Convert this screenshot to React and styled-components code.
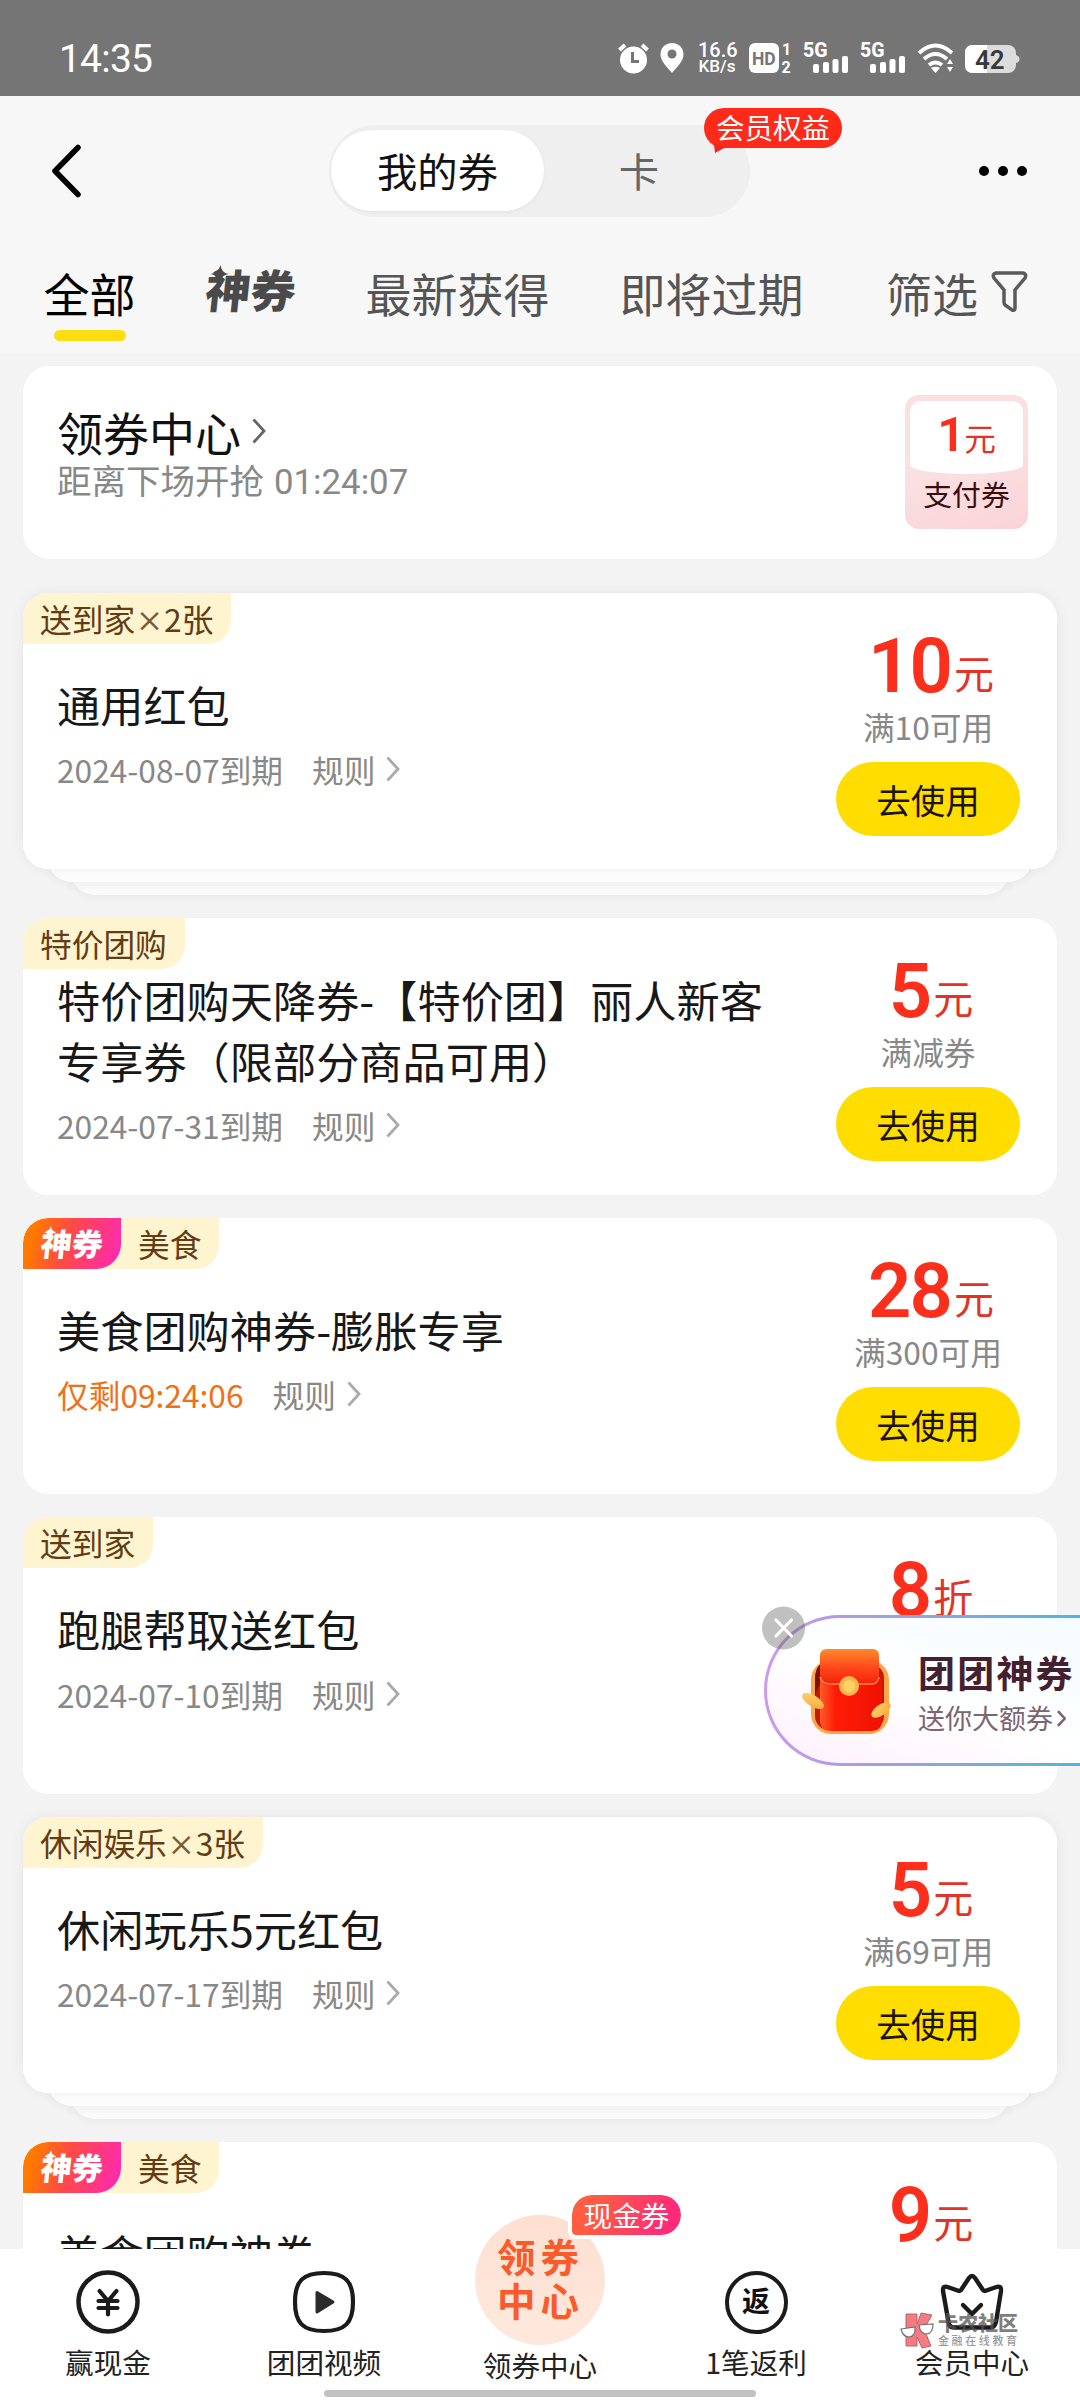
import React from 'react';
import styled, { createGlobalStyle } from 'styled-components';

const GlobalStyle = createGlobalStyle`
  * {
    box-sizing: border-box;
  }
  body {
    margin: 0;
    background: #f3f3f3;
    font-family: 'Noto Sans CJK SC', 'Noto Sans', sans-serif;
    font-weight: 400;
    color: #111;
  }
`;

const Container = styled.div`
  position: relative;
  width: 1080px;
  height: 2400px;
  background: #f3f3f3;
  overflow: hidden;
  display: flex;
  flex-direction: column;
`;

/* 状态栏 */
const StatusBar = styled.div`
  height: 96px;
  flex: none;
  padding: 40px 60px 0 59px;
  background: #757575;
  color: white;
  display: flex;
  justify-content: space-between;
  align-items: flex-start;
`;

const Clock = styled.div`
  font-family: 'Roboto', sans-serif;
  font-size: 39px;
  line-height: 38px;
  letter-spacing: -0.8px;
`;

const StatusIcons = styled.div`
  height: 36px;
  display: flex;
  align-items: center;
`;

const StatusSvg = styled.svg`
  display: block;
  flex: none;
  margin-left: ${props => props.$gap || 0}px;
  font-family: 'Roboto', sans-serif;
`;

const NetSpeed = styled.div`
  width: 38px;
  margin-left: 14px;
  font-family: 'Roboto', sans-serif;
  font-size: 17px;
  font-weight: 500;
  line-height: 16px;
  text-align: center;
  white-space: nowrap;
`;

const SpeedValue = styled.div`
  font-size: 20px;
`;

/* 顶部导航 */
const Header = styled.div`
  height: 257px;
  flex: none;
  background: #f7f7f7;
`;

const TitleBar = styled.div`
  height: 150px;
  padding: 0 51px 0 50px;
  display: grid;
  grid-template-columns: 1fr auto 1fr;
  align-items: center;
`;

const BackIcon = styled.svg`
  display: block;
`;

const MoreIcon = styled.svg`
  display: block;
  justify-self: end;
`;

const Segment = styled.div`
  position: relative;
  width: 421px;
  height: 92px;
  padding: 5px 2px;
  border-radius: 46px;
  background: #efefef;
  display: flex;
  justify-content: space-between;
`;

const SegmentItem = styled.div`
  width: ${props => (props.$active ? 213 : 218)}px;
  height: 81px;
  flex: none;
  padding-bottom: 2px;
  border-radius: 41px;
  background: ${props => (props.$active ? 'white' : 'transparent')};
  box-shadow: ${props => (props.$active ? '0 1px 4px rgba(0, 0, 0, 0.05)' : 'none')};
  color: ${props => (props.$active ? '#111' : '#666')};
  font-size: 40.3px;
  display: flex;
  align-items: center;
  justify-content: center;

  & + & {
    margin-left: -14px;
  }
`;

const MemberBadge = styled.div`
  position: absolute;
  left: 375px;
  top: -17px;
  width: 138px;
  height: 40px;
  border-radius: 20px;
  background: #ff2a1a;
  color: white;
  font-size: 28.5px;
  line-height: 37px;
  text-align: center;
`;

const BadgeTail = styled.svg`
  position: absolute;
  left: 9px;
  top: 36px;
`;

const Tabs = styled.div`
  height: 95px;
  padding: 0 52px 0 43.5px;
  display: flex;
  align-items: flex-start;
`;

const Tab = styled.div`
  margin-right: 70px;
  color: ${props => (props.$active ? '#000' : '#555')};
  font-size: 46px;
  line-height: 60px;
  padding-top: 16px;
  display: flex;
  flex-direction: column;
  align-items: center;
`;

const TabLine = styled.div`
  width: 72px;
  height: 11px;
  margin-top: 8px;
  border-radius: 6px;
  background: #ffdd10;
`;

const FilterTab = styled.div`
  margin-left: auto;
  padding-top: 16px;
  color: #555;
  font-size: 46px;
  line-height: 60px;
  display: flex;
  gap: 13px;
`;

const FilterIcon = styled.svg`
  margin-top: 9px;
`;

/* 神券字标 */
const LogoWrapper = styled.div`
  position: relative;
  width: ${props => props.$size * 2 + 2}px;
  color: ${props => props.$color};
  font-size: ${props => props.$size}px;
  font-weight: 900;
  line-height: ${props => props.$size * 1.3}px;
  white-space: nowrap;
  transform: skewX(-6deg);
`;

const LogoSpark = styled.svg`
  position: absolute;
  left: ${props => props.$size * 0.06}px;
  top: ${props => props.$size * 0.1}px;
  width: ${props => props.$size * 0.4}px;
  height: ${props => props.$size * 0.4}px;
`;

const TabLogo = styled.div`
  margin-right: 68px;
  padding-top: 14px;
`;

/* 列表 */
const List = styled.div`
  flex: 1;
  padding: 13px 23px 0;
`;

const CenterCard = styled.div`
  height: 193px;
  margin-bottom: 34px;
  padding: 29px 29px 0 34px;
  border-radius: 27px;
  background: white;
  display: flex;
  justify-content: space-between;
`;

const CenterTitle = styled.div`
  padding-top: 6px;
  font-size: 46px;
  line-height: 60px;
  display: flex;
  align-items: center;
  gap: 11px;
`;

const CenterSub = styled.div`
  margin-top: 1px;
  color: #888;
  font-size: 34.5px;
  line-height: 34px;
`;

const Countdown = styled.span`
  margin-left: 10px;
  font-family: 'Roboto', sans-serif;
  font-size: 34.8px;
`;

const PayTicket = styled.div`
  width: 123px;
  height: 134px;
  padding: 6px 5px 0;
  border-radius: 14px;
  background: linear-gradient(160deg, #fae0e1 50%, #fbd3d8 100%);
  overflow: hidden;
`;

const PayTop = styled.div`
  height: 73px;
  border-radius: 11px 11px 56px 56px / 11px 11px 9px 9px;
  background: white;
  color: #e33226;
  font-size: 31.7px;
  line-height: 68px;
  text-align: center;
`;

const PayNumber = styled.span`
  color: #fb2f1c;
  font-family: 'Roboto', sans-serif;
  font-size: 49px;
  font-weight: 600;
  letter-spacing: -1px;
`;

const PayName = styled.div`
  padding-top: 6px;
  color: #3d0c0c;
  font-size: 28.8px;
  line-height: 28px;
  text-align: center;
`;

const CouponWrapper = styled.div`
  margin-bottom: 23.04px;
`;

const Card = styled.div`
  position: relative;
  z-index: 2;
  height: 276.48px;
  padding: 0 37px 0 34px;
  border-radius: 25px;
  background: white;
  box-shadow: ${props => (props.$stacked ? '0 0 14px rgba(0, 0, 0, 0.06)' : 'none')};
  display: flex;
  justify-content: space-between;
`;

/* 叠在卡片下方，只露出底边 */
const StackLayer = styled.div`
  position: relative;
  z-index: ${props => (props.$second ? 0 : 1)};
  height: 52.96px;
  margin: -40px ${props => (props.$second ? 47 : 24)}px 0;
  border-radius: 25px;
  background: ${props => (props.$second ? '#fafafa' : '#fdfdfd')};
  box-shadow: 0 2px 10px rgba(0, 0, 0, 0.05);
`;

const Tags = styled.div`
  position: absolute;
  left: 0;
  top: 0;
  height: 51px;
  border-radius: 25px 0 23px 0;
  background: #fef4cf;
  overflow: hidden;
  display: flex;
`;

const GodTag = styled.div`
  width: 98px;
  height: 51px;
  padding: 5px 0 0 18px;
  border-radius: 25px 0 25px 0;
  background: linear-gradient(105deg, #ff7a00 12%, #ff4a45 45%, #ff2ab0 95%);
`;

const TagText = styled.div`
  padding: 0 18px 0 17px;
  color: #643c14;
  font-size: 31.7px;
  line-height: 51px;
  white-space: nowrap;
`;

const Times = styled.span`
  display: inline-block;
  width: 29px;
  color: #7b5a3a;
  font-weight: 500;
  font-size: 28px;
  text-align: center;
`;

const Info = styled.div`
  padding-top: 3px;
  display: flex;
  flex-direction: column;
  justify-content: center;
`;

const CouponTitle = styled.div`
  width: 720px;
  color: #181818;
  font-size: 43.2px;
  line-height: 60.5px;
`;

const Meta = styled.div`
  height: 44px;
  margin-top: 13px;
  color: #888;
  font-size: 31.7px;
  line-height: 44px;
  display: flex;
  align-items: center;
`;

const Expire = styled.div`
  margin-right: 29px;
  color: ${props => (props.$urgent ? '#f07114' : '#888')};
`;

const Arrow = styled.svg`
  display: block;
  margin-left: ${props => props.$gap || 0}px;
`;

const PriceColumn = styled.div`
  width: 184px;
  padding-top: 32px;
  display: flex;
  flex-direction: column;
  align-items: center;
`;

const Amount = styled.div`
  height: 82px;
  margin-left: 6px;
  color: #e33226;
  font-size: 40px;
  line-height: 82px;
  white-space: nowrap;
`;

const AmountNumber = styled.span`
  color: #fb2f1c;
  font-family: 'Roboto', sans-serif;
  font-size: 76px;
  font-weight: 600;
  letter-spacing: -2px;
`;

const Unit = styled.span`
  position: relative;
  top: -3px;
  margin-left: 3px;
`;

const Condition = styled.div`
  margin-top: -2px;
  color: #888;
  font-size: 31.7px;
  line-height: 42px;
  white-space: nowrap;
`;

const UseButton = styled.div`
  width: 184px;
  height: 74px;
  margin-top: 15px;
  border-radius: 37px;
  background: #ffdd00;
  color: #1c1400;
  font-size: 34.5px;
  line-height: 74px;
  text-align: center;
`;

/* 右侧悬浮入口 */
const FloatEntry = styled.div`
  position: absolute;
  left: 764px;
  top: 1615px;
  z-index: 5;
  width: 340px;
  height: 151px;
  padding: 30px 0 0 35px;
  border: 3px solid transparent;
  border-radius: 76px 0 0 76px;
  background:
    linear-gradient(20deg, #fdf0ff 0%, #ffffff 45%, #f4fbff 100%) padding-box,
    linear-gradient(90deg, #cb9bea 0%, #b29be6 20%, #55b4df 90%) border-box;
  display: flex;
  align-items: flex-start;
`;

const FloatText = styled.div`
  margin-left: 26px;
`;

const FloatTitle = styled.div`
  color: #45202f;
  font-size: 37px;
  font-weight: 700;
  line-height: 48px;
  letter-spacing: 2.2px;
  white-space: nowrap;
`;

const FloatSub = styled.div`
  margin-top: 3px;
  color: #7b6570;
  font-size: 27px;
  line-height: 38px;
  white-space: nowrap;
  display: flex;
  align-items: center;
`;

const CloseIcon = styled.svg`
  position: absolute;
  left: 762px;
  top: 1606px;
  z-index: 6;
`;

/* 底部导航 */
const BottomNav = styled.div`
  position: absolute;
  left: 0;
  right: 0;
  bottom: 0;
  z-index: 4;
  height: 151px;
  background: white;
  display: grid;
  grid-template-columns: repeat(5, 1fr);
`;

const NavItem = styled.div`
  position: relative;
  height: 136px;
  color: #222;
  font-size: 28.6px;
  line-height: 40px;
  display: flex;
  flex-direction: column;
  align-items: center;
  justify-content: flex-end;
  padding-bottom: ${props => (props.$main ? 0 : 3)}px;
`;

const NavIcon = styled.svg`
  display: block;
  margin-bottom: 8px;
`;

const FanIcon = styled.div`
  width: 63px;
  height: 63px;
  margin-bottom: 8px;
  border: 4.5px solid #1b1b1b;
  border-radius: 50%;
  color: #111;
  font-size: 28px;
  font-weight: 700;
  line-height: 51px;
  text-align: center;
`;

const MainCircle = styled.div`
  width: 130px;
  height: 130px;
  flex: none;
  padding: 18px 0 0 22px;
  border-radius: 50%;
  background: linear-gradient(190deg, #fddfd0 0%, #fee9de 100%);
  color: #f95b2b;
  font-size: 38.5px;
  font-weight: 700;
  line-height: 44px;
  letter-spacing: 5px;
`;

const CashBadge = styled.div`
  position: absolute;
  left: 136px;
  top: -58px;
  width: 117px;
  height: 48px;
  border: 4px solid white;
  border-radius: 24px 24px 24px 8px;
  background: linear-gradient(110deg, #ff5d42 20%, #ff2b78 85%) padding-box;
  color: white;
  font-size: 28.6px;
  line-height: 40px;
  text-align: center;
`;

const HomeIndicator = styled.div`
  position: absolute;
  left: 324px;
  bottom: 3px;
  width: 432px;
  height: 7px;
  border-radius: 4px;
  background: #c1c1c1;
`;

const Watermark = styled.div`
  position: absolute;
  left: 900px;
  top: 2312px;
  z-index: 7;
  opacity: 0.75;
  display: flex;
  gap: 4px;
`;

const WatermarkName = styled.div`
  color: #555;
  font-size: 20px;
  font-weight: 900;
  line-height: 21px;
  white-space: nowrap;
`;

const WatermarkSub = styled.div`
  margin-top: 1px;
  color: #777;
  font-size: 11px;
  font-weight: 500;
  line-height: 12px;
  letter-spacing: 2.6px;
  white-space: nowrap;
`;

const coupons = [
  { tag: '送到家', count: 2, title: '通用红包', expire: '2024-08-07到期', amount: '10', unit: '元', condition: '满10可用' },
  {
    tag: '特价团购',
    title: '特价团购天降券-【特价团】丽人新客专享券（限部分商品可用）',
    expire: '2024-07-31到期',
    amount: '5',
    unit: '元',
    condition: '满减券',
  },
  { god: true, tag: '美食', title: '美食团购神券-膨胀专享', expire: '仅剩09:24:06', urgent: true, amount: '28', unit: '元', condition: '满300可用' },
  { tag: '送到家', title: '跑腿帮取送红包', expire: '2024-07-10到期', amount: '8', unit: '折' },
  { tag: '休闲娱乐', count: 3, title: '休闲玩乐5元红包', expire: '2024-07-17到期', amount: '5', unit: '元', condition: '满69可用' },
  { god: true, tag: '美食', title: '美食团购神券', amount: '9', unit: '元' },
];

const GodLogo = ({ size, color }) => (
  <LogoWrapper $size={size} $color={color}>
    神券
    <LogoSpark $size={size} viewBox="0 0 20 20">
      <path d="M10 0 Q11.500 8.500 20 10 Q11.500 11.500 10 20 Q8.500 11.500 0 10 Q8.500 8.500 10 0Z" fill={color} />
    </LogoSpark>
  </LogoWrapper>
);

const ChevronRight = ({ color = '#aaa', gap, width = 14, height = 26, stroke = 2.8 }) => (
  <Arrow $gap={gap} width={width} height={height} viewBox="0 0 14 26">
    <path d="M1.500 1.500 L12 13 L1.500 24.500" fill="none" stroke={color} strokeWidth={stroke} />
  </Arrow>
);

const Signal = ({ gap }) => (
  <StatusSvg $gap={gap} width="46" height="40" viewBox="0 -4 46 40">
    <text x="0" y="14.500" fontSize="19.500" fontWeight="800" fill="white">5G</text>
    <rect x="10" y="22" width="6" height="9" rx="2" fill="white" />
    <rect x="20" y="20" width="6" height="11" rx="2" fill="white" />
    <rect x="29.500" y="17" width="6" height="14" rx="2" fill="white" />
    <rect x="39" y="14" width="6" height="17" rx="2" fill="white" />
  </StatusSvg>
);

const Coupon = ({ item }) => (
  <CouponWrapper>
    <Card $stacked={!!item.count}>
      <Tags>
        {item.god && (
          <GodTag>
            <GodLogo size={31} color="white" />
          </GodTag>
        )}
        <TagText>
          {item.tag}
          {item.count && (
            <>
              <Times>×</Times>
              {item.count}张
            </>
          )}
        </TagText>
      </Tags>
      <Info>
        <CouponTitle>{item.title}</CouponTitle>
        <Meta>
          {item.expire && (
            <>
              <Expire $urgent={item.urgent}>{item.expire}</Expire>
              规则
              <ChevronRight gap={11} />
            </>
          )}
        </Meta>
      </Info>
      <PriceColumn>
        <Amount>
          <AmountNumber>{item.amount}</AmountNumber>
          <Unit>{item.unit}</Unit>
        </Amount>
        {item.condition && (
          <>
            <Condition>{item.condition}</Condition>
            <UseButton>去使用</UseButton>
          </>
        )}
      </PriceColumn>
    </Card>
    {item.count && (
      <>
        <StackLayer />
        <StackLayer $second />
      </>
    )}
  </CouponWrapper>
);

const RedPacket = () => (
  <svg width="90" height="88" viewBox="0 0 90 88">
    <defs>
      <linearGradient id="flap" x1="0" y1="0" x2="0" y2="1">
        <stop offset="0" stopColor="#ff8a2c" />
        <stop offset="0.5" stopColor="#ff4a1c" />
        <stop offset="1" stopColor="#f81d08" />
      </linearGradient>
      <linearGradient id="pocket" x1="0" y1="0" x2="1" y2="0">
        <stop offset="0" stopColor="#ff5a2a" />
        <stop offset="0.250" stopColor="#ff1c06" />
        <stop offset="1" stopColor="#ee1202" />
      </linearGradient>
      <linearGradient id="gold" x1="0" y1="0" x2="1" y2="1">
        <stop offset="0" stopColor="#ffd873" />
        <stop offset="1" stopColor="#f9a534" />
      </linearGradient>
    </defs>
    <rect x="9" y="12" width="78" height="74" rx="20" fill="#ffa748" />
    <rect x="13" y="16" width="69" height="66" rx="14" fill="#c01a08" />
    <path d="M13 30 Q14 18 19 16 V36 Q14 40 13 50Z" fill="#7c1008" />
    <path d="M18 30 H80 V72 Q80 83 69 83 H29 Q18 83 18 72Z" fill="url(#pocket)" />
    <path d="M18 8 Q18 1 25 1 H71 Q77 1 77 8 V30 Q77 37 70 37 H26 Q18 37 18 30Z" fill="url(#flap)" />
    <path d="M18 29 Q20 36 28 36 H69 Q76 36 77 29" fill="none" stroke="#ff8850" strokeWidth="1.500" />
    <circle cx="47" cy="38" r="10" fill="#ffb64a" />
    <circle cx="47" cy="38" r="6" fill="#ffd266" />
    <ellipse cx="11" cy="53" rx="12.500" ry="5.500" transform="rotate(32 11 53)" fill="url(#gold)" />
    <ellipse cx="79" cy="62" rx="11" ry="5.500" transform="rotate(-34 79 62)" fill="url(#gold)" />
  </svg>
);

const App = () => {
  return (
    <Container>
      <GlobalStyle />
      <StatusBar>
        <Clock>14:35</Clock>
        <StatusIcons>
          <StatusSvg width="31" height="32" viewBox="0 0 31 32">
            <circle cx="15.500" cy="18" r="13.500" fill="white" />
            <path d="M1.500 8 L7 3 M29.500 8 L24 3" stroke="white" strokeWidth="4" />
            <path d="M14.500 10 V19.500 H21" fill="none" stroke="#757575" strokeWidth="3" />
          </StatusSvg>
          <StatusSvg $gap={11} width="24" height="32" viewBox="0 0 24 32">
            <path d="M12 1 C5 1 0.500 6 0.500 12.500 C0.500 20 9 27 12 31 C15 27 23.500 20 23.500 12.500 C23.500 6 19 1 12 1Z" fill="white" />
            <circle cx="12" cy="12" r="4.500" fill="#757575" />
          </StatusSvg>
          <NetSpeed>
            <SpeedValue>16.6</SpeedValue>
            KB/s
          </NetSpeed>
          <StatusSvg $gap={13} width="46" height="42" viewBox="0 -5 46 42">
            <rect x="0" y="1" width="30" height="30" rx="6" fill="white" />
            <text x="3" y="22.500" fontSize="17.500" fontWeight="700" fill="#757575">HD</text>
            <text x="33" y="13" fontSize="16" fontWeight="700" fill="white">1</text>
            <text x="32.500" y="31" fontSize="16" fontWeight="700" fill="white">2</text>
          </StatusSvg>
          <Signal gap={8} />
          <Signal gap={11} />
          <StatusSvg $gap={11} width="39" height="32" viewBox="0 0 39 32">
            <path d="M2 11 Q18.500 -4 35 11 M7 17 Q18.500 7 30 17 M12 23 Q18.500 18 25 23" fill="none" stroke="white" strokeWidth="4" />
            <path d="M14 26 Q18.500 23.500 23 26 L18.500 31Z" fill="white" />
            <path d="M30 22 L33 17 L36 22Z M30 25 L33 30 L36 25Z" fill="white" />
          </StatusSvg>
          <StatusSvg $gap={8} width="56" height="32" viewBox="0 0 56 32">
            <rect x="1" y="3" width="51" height="28" rx="8" fill="#dcdcdc" />
            <path d="M9 3 H23 V31 H9 Q1 31 1 23 V11 Q1 3 9 3Z" fill="white" />
            <path d="M52 13 Q55.500 14 55.500 17 Q55.500 20 52 21Z" fill="#dcdcdc" />
            <text x="11" y="26.500" fontSize="26" fontWeight="600" fill="#383838">42</text>
          </StatusSvg>
        </StatusIcons>
      </StatusBar>

      <Header>
        <TitleBar>
          <BackIcon width="34" height="56" viewBox="0 0 34 56">
            <path d="M28 4.500 L5 28 L28 51.500" fill="none" stroke="#000" strokeWidth="5.500" strokeLinecap="round" strokeLinejoin="round" />
          </BackIcon>
          <Segment>
            <SegmentItem $active>我的券</SegmentItem>
            <SegmentItem>卡</SegmentItem>
            <MemberBadge>
              会员权益
              <BadgeTail width="14" height="10" viewBox="0 0 14 10">
                <path d="M1 0 L2 9 L13 3Z" fill="#f0271a" />
              </BadgeTail>
            </MemberBadge>
          </Segment>
          <MoreIcon width="50" height="12" viewBox="0 0 50 12">
            <circle cx="5" cy="6" r="5" />
            <circle cx="24" cy="6" r="5" />
            <circle cx="43" cy="6" r="5" />
          </MoreIcon>
        </TitleBar>
        <Tabs>
          <Tab $active>
            全部
            <TabLine />
          </Tab>
          <TabLogo>
            <GodLogo size={45} color="#4a4a4a" />
          </TabLogo>
          <Tab>最新获得</Tab>
          <Tab>即将过期</Tab>
          <FilterTab>
            筛选
            <FilterIcon width="37" height="42" viewBox="0 0 37 42">
              <path d="M5 2 H32 Q36 3 34 7 L24 19 V37 Q24 40 21 39 L14 34 Q13 33 13 31 V19 L3 7 Q1 3 5 2Z" fill="none" stroke="#5a5a5a" strokeWidth="3.500" />
            </FilterIcon>
          </FilterTab>
        </Tabs>
      </Header>

      <List>
        <CenterCard>
          <div>
            <CenterTitle>
              领券中心
              <ChevronRight color="#666" stroke={2.8} />
            </CenterTitle>
            <CenterSub>
              距离下场开抢
              <Countdown>01:24:07</Countdown>
            </CenterSub>
          </div>
          <PayTicket>
            <PayTop>
              <PayNumber>1</PayNumber>元
            </PayTop>
            <PayName>支付券</PayName>
          </PayTicket>
        </CenterCard>
        {coupons.map((item, index) => (
          <Coupon key={index} item={item} />
        ))}
      </List>

      <FloatEntry>
        <RedPacket />
        <FloatText>
          <FloatTitle>团团神券</FloatTitle>
          <FloatSub>
            送你大额券
            <ChevronRight color="#7b6570" gap={4} width={9} height={17} stroke={4} />
          </FloatSub>
        </FloatText>
      </FloatEntry>
      <CloseIcon width="44" height="44" viewBox="0 0 44 44">
        <circle cx="21.500" cy="22" r="21.500" fill="rgba(90, 90, 90, 0.38)" />
        <path d="M14 14 L29.500 30 M29.500 14 L14 30" stroke="white" strokeWidth="3.200" strokeLinecap="round" />
      </CloseIcon>

      <BottomNav>
        <NavItem>
          <NavIcon width="64" height="64" viewBox="0 0 64 64">
            <circle cx="32" cy="32" r="29.500" fill="none" stroke="#1b1b1b" strokeWidth="4.500" />
            <path d="M23.500 21 L32 31 L40.500 21 M22.500 31 H41.500 M22.500 38 H41.500 M32 31 V44.500" fill="none" stroke="#1b1b1b" strokeWidth="4.200" strokeLinecap="round" />
          </NavIcon>
          赢现金
        </NavItem>
        <NavItem>
          <NavIcon width="64" height="64" viewBox="0 0 64 64">
            <path d="M32 3 C53 3 61 11 61 32 C61 53 53 61 32 61 C11 61 3 53 3 32 C3 11 11 3 32 3Z" fill="none" stroke="#1b1b1b" strokeWidth="4.200" />
            <path d="M25 22.500 L41 32 L25 42Z" fill="#2b2b2b" stroke="#2b2b2b" strokeWidth="3" strokeLinejoin="round" />
          </NavIcon>
          团团视频
        </NavItem>
        <NavItem $main>
          <MainCircle>
            领券
            <br />
            中心
          </MainCircle>
          <CashBadge>现金券</CashBadge>
          领券中心
        </NavItem>
        <NavItem>
          <FanIcon>返</FanIcon>
          1笔返利
        </NavItem>
        <NavItem>
          <NavIcon width="64" height="64" viewBox="0 0 64 64">
            <path d="M8.500 52 L3 21 Q2.500 15.500 7.500 17 L19 21 Q20 21 21 20 L29 8 Q32 4 35 8 L43 20 Q44 21 45 21 L56.500 17 Q61.500 15.500 61 21 L56 52 Q55 57.500 50 57.500 H14 Q9 57.500 8.500 52Z" fill="none" stroke="#1b1b1b" strokeWidth="4.400" strokeLinejoin="round" />
            <path d="M23 35 L32 44 L41 35" fill="none" stroke="#1b1b1b" strokeWidth="4.400" strokeLinecap="round" strokeLinejoin="round" />
          </NavIcon>
          会员中心
        </NavItem>
        <HomeIndicator />
      </BottomNav>

      <Watermark>
        <svg width="34" height="38" viewBox="0 0 34 38">
          <path d="M6 2 H17 V12 L21 1 L32 3 L24 17 L31 34 L22 36 L17 25 V34 H6Z" fill="#ee4f5c" stroke="#a33" strokeWidth="1" />
          <path d="M1 17 L15 15 Q16 24 9 25 Q3 25 1 17Z M19 13 L33 12 Q33 21 27 22 Q20 22 19 13Z" fill="white" stroke="#444" strokeWidth="1.200" />
        </svg>
        <div>
          <WatermarkName>卡农社区</WatermarkName>
          <WatermarkSub>金融在线教育</WatermarkSub>
        </div>
      </Watermark>
    </Container>
  );
};

export default App;
